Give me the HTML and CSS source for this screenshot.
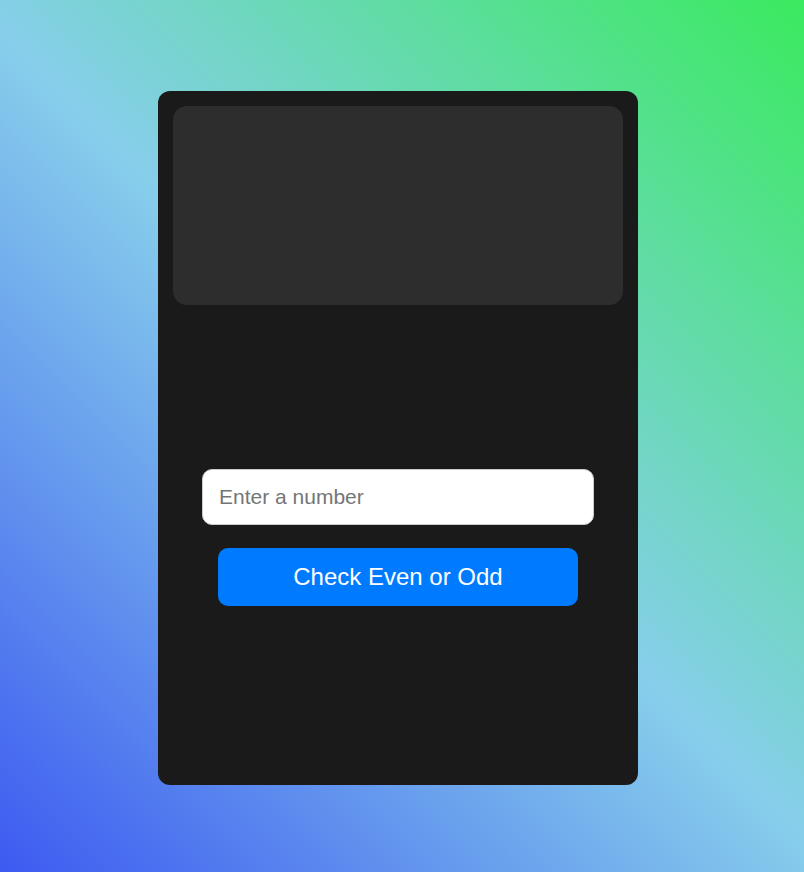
FILE: index.html
```html
<!DOCTYPE html>
<html lang="en">
<head>
<meta charset="UTF-8">
<title>Even or Odd</title>
<link rel="stylesheet" href="styles.css">
</head>
<body>
  <div class="card">
    <div class="display"></div>
    <div class="controls">
      <input class="number-input" type="number" placeholder="Enter a number">
      <button class="check-btn" type="button">Check Even or Odd</button>
    </div>
  </div>
</body>
</html>
```
FILE: styles.css
```css
* { box-sizing: border-box; }
html, body { height: 100%; }
body {
  margin: 0;
  padding: 4px 8px 0 0;
  min-height: 100vh;
  display: flex;
  align-items: center;
  justify-content: center;
  font-family: "Liberation Sans", Arial, sans-serif;
  background: linear-gradient(45deg, #3d5af1 0%, #87ceeb 50%, #3aea5e 100%);
}
.card {
  width: 480px;
  height: 694px;
  background: #1a1a1a;
  border-radius: 12px;
  padding: 15px;
  display: flex;
  flex-direction: column;
}
.display {
  height: 199px;
  flex: none;
  background: #2d2d2d;
  border-radius: 14px;
}
.controls {
  flex: 1;
  display: flex;
  flex-direction: column;
  align-items: center;
  justify-content: center;
  gap: 23px;
}
.number-input {
  width: 392px;
  height: 56px;
  border: 1px solid #ccc;
  border-radius: 10px;
  background: #fff;
  padding: 0 16px;
  font-family: "Liberation Sans", Arial, sans-serif;
  font-size: 21px;
  outline: none;
}
.number-input::placeholder { color: #757575; }
.check-btn {
  width: 360px;
  height: 58px;
  border: none;
  border-radius: 10px;
  background: #007bff;
  color: #fff;
  font-family: "Liberation Sans", Arial, sans-serif;
  font-size: 24px;
  cursor: pointer;
}
```
